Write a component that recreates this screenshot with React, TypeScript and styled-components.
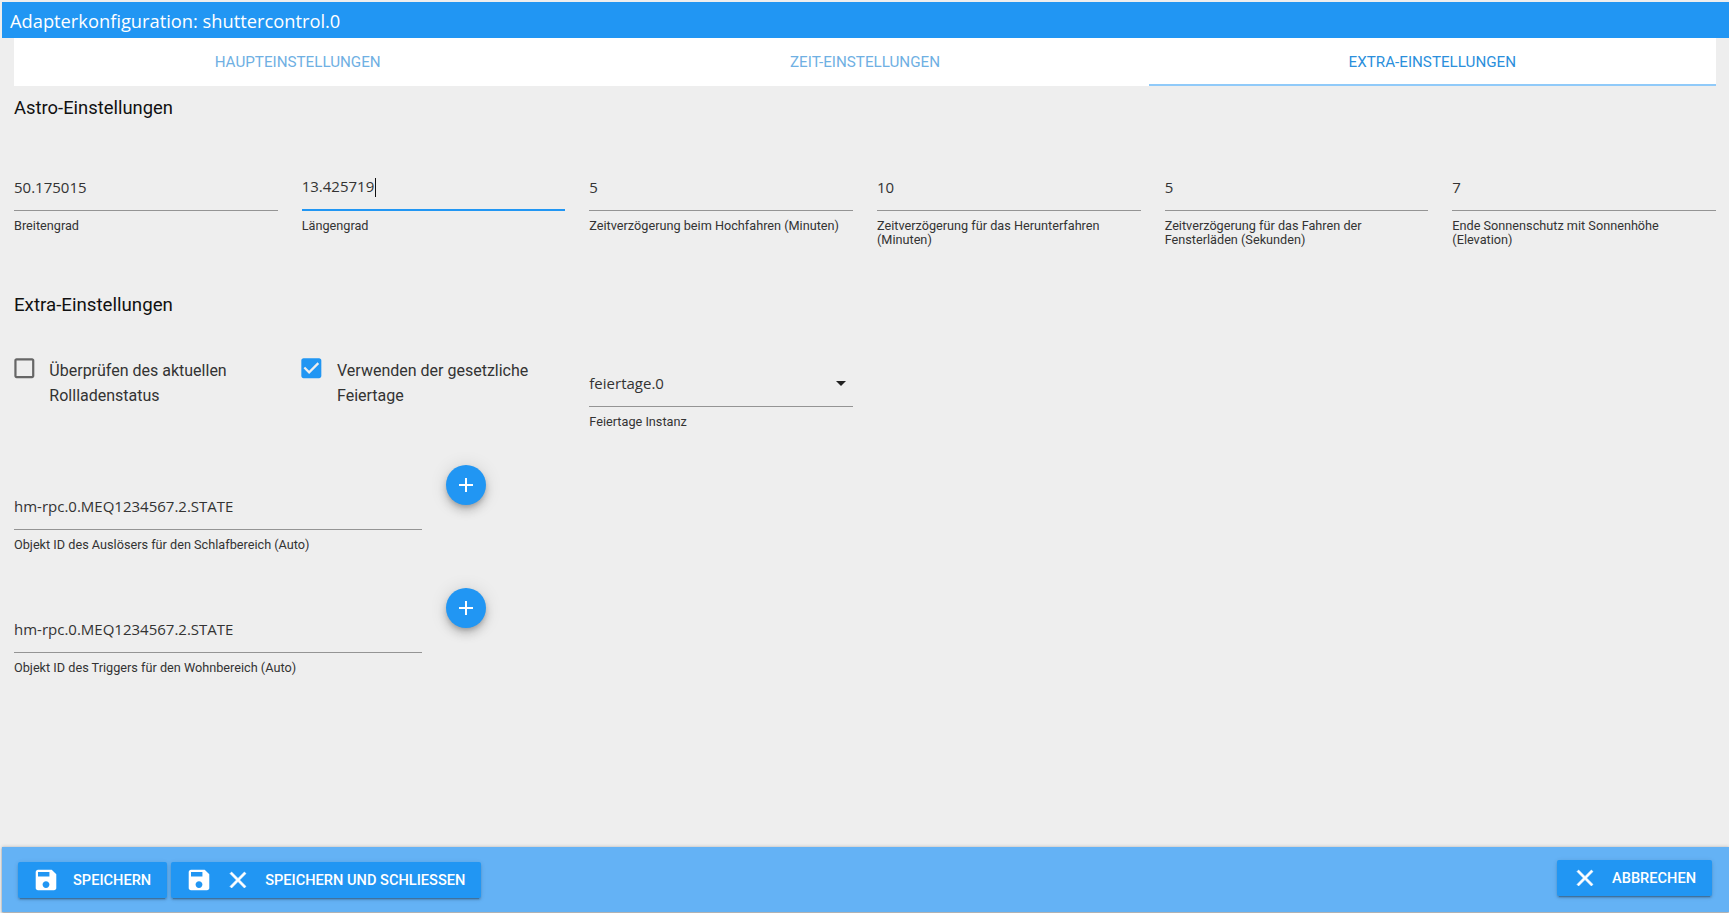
import styled, { createGlobalStyle } from 'styled-components'

const GlobalStyle = createGlobalStyle`
  html, body {
    margin: 0;
    padding: 0;
    height: 100%;
    background: #eeeeee;
    overflow: hidden;
  }
  * {
    box-sizing: border-box;
  }
`

const Page = styled.div`
  width: 1729px;
  height: 913px;
  display: flex;
  flex-direction: column;
  padding: 2px 0 1px 2px;
  background: #eeeeee;
  font-family: Roboto, sans-serif;
`

const Header = styled.header`
  height: 36px;
  flex: none;
  background: #2196f3;
  color: #fff;
  font-family: 'Open Sans', sans-serif;
  font-size: 18.3px;
  line-height: 37px;
  padding-left: 8px;
`

const Main = styled.main`
  flex: 1;
  padding: 0 13px 0 12px;
`

const Tabs = styled.nav`
  display: grid;
  grid-template-columns: repeat(3, 1fr);
  height: 48px;
  background: #fff;
`

const Tab = styled.div<{ $active?: boolean }>`
  display: flex;
  align-items: center;
  justify-content: center;
  padding-top: 1px;
  font-size: 15.2px;
  text-transform: uppercase;
  color: ${p => (p.$active ? '#2b8fdc' : '#6fb0e3')};
  border-bottom: 2px solid ${p => (p.$active ? '#90caf9' : 'transparent')};
`

const SectionTitle = styled.h2`
  margin: 0;
  font-size: 18.7px;
  font-weight: 400;
  line-height: 24px;
  color: #111;
`

const AstroTitle = styled(SectionTitle)`
  margin-top: 10px;
  font-size: 18.4px;
`

const FieldGrid = styled.div`
  display: grid;
  grid-template-columns: repeat(6, 1fr);
  column-gap: 24px;
  margin-top: 54px;
  height: 119px;
`

const Field = styled.div<{ $width?: number }>`
  ${p => (p.$width ? `width: ${p.$width}px;` : '')}
`

const Value = styled.div<{ $focused?: boolean }>`
  height: 37px;
  display: flex;
  align-items: center;
  justify-content: space-between;
  font-family: 'Open Sans', sans-serif;
  font-size: 15px;
  color: #333;
  border-bottom: ${p => (p.$focused ? '2px solid #2196f3' : '1px solid #949494')};
  padding-bottom: ${p => (p.$focused ? '10px' : '11px')};
`

const Caret = styled.span`
  display: inline-block;
  width: 1px;
  height: 19px;
  margin-left: 1px;
  background: #111;
  vertical-align: middle;
`

const Hint = styled.div`
  margin-top: 8px;
  font-size: 12.7px;
  line-height: 14px;
  color: #333;
`

const OptionRow = styled.div`
  display: grid;
  grid-template-columns: repeat(6, 1fr);
  column-gap: 24px;
  margin-top: 41px;
  height: 107px;
`

const CheckLabel = styled.label`
  display: flex;
  align-items: flex-start;
  gap: 12px;
  font-size: 16px;
  line-height: 25px;
  color: #333;
`

const CheckIcon = styled.svg`
  flex: none;
  width: 26.67px;
  height: 26.67px;
  margin: -3.3px 0 0 -3.3px;
`

const SelectField = styled(Field)`
  padding-top: 12px;
`

const Arrow = styled.svg`
  width: 24px;
  height: 24px;
  fill: #222;
  flex: none;
`

const ObjectRow = styled.div`
  display: flex;
  align-items: flex-start;
  gap: 24px;
  height: 123px;
`

const ObjectField = styled(Field)`
  padding-top: 28px;
`

const Fab = styled.button`
  width: 40px;
  height: 40px;
  border: 0;
  border-radius: 50%;
  padding: 8px;
  background: #2196f3;
  box-shadow: 0 3px 5px -1px rgba(0, 0, 0, 0.2), 0 6px 10px 0 rgba(0, 0, 0, 0.14), 0 1px 18px 0 rgba(0, 0, 0, 0.12);
  display: flex;
`

const Footer = styled.footer`
  height: 65px;
  flex: none;
  display: flex;
  justify-content: space-between;
  align-items: flex-start;
  padding: 15px 17px 0 16px;
  background: #64b2f5;
  box-shadow: 0 -1px 3px rgba(0, 0, 0, 0.12), 0 1px 2px rgba(0, 0, 0, 0.35);
`

const ButtonGroup = styled.div`
  display: flex;
  gap: 4px;
`

const ActionButton = styled.button<{ $raised?: boolean }>`
  height: 36px;
  display: flex;
  align-items: center;
  border: 0;
  border-radius: 2px;
  padding: 0 16px 1px;
  background: #2196f3;
  color: #fff;
  font-family: Roboto, sans-serif;
  font-size: 14.6px;
  font-weight: 500;
  white-space: nowrap;
  text-transform: uppercase;
  box-shadow: 0 3px 1px -2px rgba(0, 0, 0, 0.2), 0 2px 2px 0 rgba(0, 0, 0, 0.14), 0 1px 5px 0 rgba(0, 0, 0, 0.12);
  ${p => (p.$raised ? 'margin-top: -2px;' : '')}
`

const ButtonIcon = styled.svg`
  width: 24px;
  height: 24px;
  fill: #fff;
  flex: none;
  margin-right: 15px;
`

const PlusIcon = styled.svg`
  width: 24px;
  height: 24px;
  fill: #fff;
`

const savePath =
  'M17 3H5c-1.11 0-2 .9-2 2v14c0 1.1.89 2 2 2h14c1.1 0 2-.9 2-2V7l-4-4zm-5 16c-1.66 0-3-1.34-3-3s1.34-3 3-3 3 1.34 3 3-1.34 3-3 3zm3-10H5V5h10v4z'
const closePath =
  'M19 6.41L17.59 5 12 10.59 6.41 5 5 6.41 10.59 12 5 17.59 6.41 19 12 13.41 17.59 19 19 17.59 13.41 12z'
const addPath = 'M19 13h-6v6h-2v-6H5v-2h6V5h2v6h6v2z'

const SaveIcon = () => (
  <ButtonIcon viewBox="1.5 1.5 21 21">
    <path d={savePath} />
  </ButtonIcon>
)

const CloseIcon = () => (
  <ButtonIcon viewBox="1.5 1.5 21 21">
    <path d={closePath} stroke="#fff" strokeWidth="0.5" />
  </ButtonIcon>
)

const Checkbox = ({ checked }: { checked?: boolean }) => (
  <CheckIcon viewBox="0 0 24 24">
    {checked ? (
      <path
        fill="#2196f3"
        d="M19 3H5c-1.11 0-2 .9-2 2v14c0 1.1.89 2 2 2h14c1.11 0 2-.9 2-2V5c0-1.1-.89-2-2-2zm-9 14l-5-5 1.41-1.41L10 14.17l7.59-7.59L19 8l-9 9z"
      />
    ) : (
      <path
        fill="#666"
        d="M19 5v14H5V5h14m0-2H5c-1.1 0-2 .9-2 2v14c0 1.1.9 2 2 2h14c1.1 0 2-.9 2-2V5c0-1.1-.9-2-2-2z"
      />
    )}
  </CheckIcon>
)

const astroFields = [
  { value: '50.175015', hint: 'Breitengrad' },
  { value: '13.425719', hint: 'Längengrad', focused: true },
  { value: '5', hint: 'Zeitverzögerung beim Hochfahren (Minuten)' },
  { value: '10', hint: 'Zeitverzögerung für das Herunterfahren (Minuten)' },
  { value: '5', hint: 'Zeitverzögerung für das Fahren der Fensterläden (Sekunden)' },
  { value: '7', hint: 'Ende Sonnenschutz mit Sonnenhöhe (Elevation)' },
]

const objectFields = [
  'Objekt ID des Auslösers für den Schlafbereich (Auto)',
  'Objekt ID des Triggers für den Wohnbereich (Auto)',
]

export default function App() {
  return (
    <Page>
      <GlobalStyle />
      <Header>Adapterkonfiguration: shuttercontrol.0</Header>
      <Main>
        <Tabs>
          <Tab>Haupteinstellungen</Tab>
          <Tab>Zeit-Einstellungen</Tab>
          <Tab $active>Extra-Einstellungen</Tab>
        </Tabs>
        <AstroTitle>Astro-Einstellungen</AstroTitle>
        <FieldGrid>
          {astroFields.map((field, index) => (
            <Field key={index}>
              <Value $focused={field.focused}>
                <span>
                  {field.value}
                  {field.focused && <Caret />}
                </span>
              </Value>
              <Hint>{field.hint}</Hint>
            </Field>
          ))}
        </FieldGrid>
        <SectionTitle>Extra-Einstellungen</SectionTitle>
        <OptionRow>
          <CheckLabel>
            <Checkbox />
            Überprüfen des aktuellen Rollladenstatus
          </CheckLabel>
          <CheckLabel>
            <Checkbox checked />
            Verwenden der gesetzliche Feiertage
          </CheckLabel>
          <SelectField>
            <Value>
              feiertage.0
              <Arrow viewBox="0 0 24 24">
                <path d="M7 10l5 5 5-5z" />
              </Arrow>
            </Value>
            <Hint>Feiertage Instanz</Hint>
          </SelectField>
        </OptionRow>
        {objectFields.map((hint, index) => (
          <ObjectRow key={index}>
            <ObjectField $width={408}>
              <Value>hm-rpc.0.MEQ1234567.2.STATE</Value>
              <Hint>{hint}</Hint>
            </ObjectField>
            <Fab>
              <PlusIcon viewBox="0 0 24 24">
                <path d={addPath} />
              </PlusIcon>
            </Fab>
          </ObjectRow>
        ))}
      </Main>
      <Footer>
        <ButtonGroup>
          <ActionButton>
            <SaveIcon />
            Speichern
          </ActionButton>
          <ActionButton>
            <SaveIcon />
            <CloseIcon />
            Speichern und schliessen
          </ActionButton>
        </ButtonGroup>
        <ActionButton $raised>
          <CloseIcon />
          Abbrechen
        </ActionButton>
      </Footer>
    </Page>
  )
}
